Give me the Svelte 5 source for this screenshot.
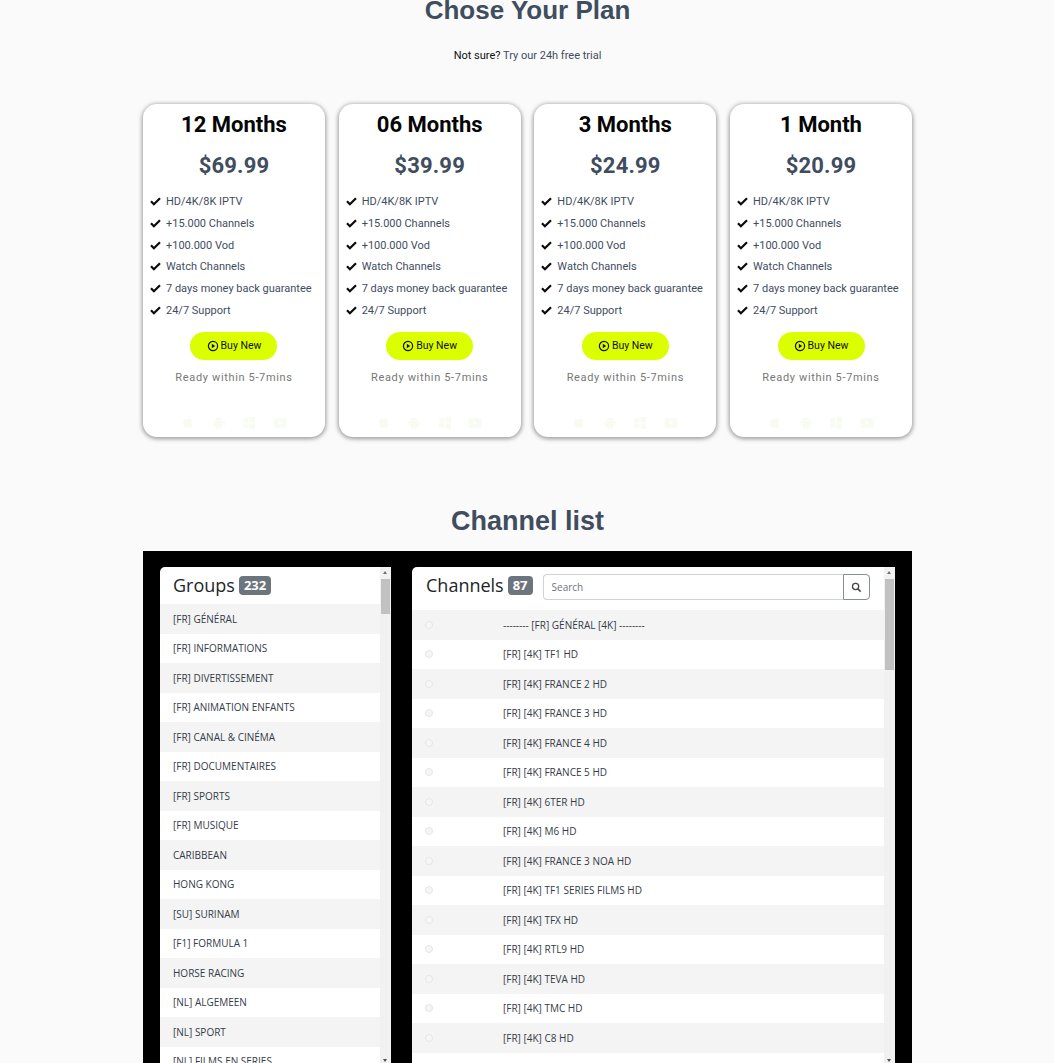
<script>
  const plans = [
    { name: '12 Months', price: '$69.99' },
    { name: '06 Months', price: '$39.99' },
    { name: '3 Months', price: '$24.99' },
    { name: '1 Month', price: '$20.99' },
  ];
  const features = [
    'HD/4K/8K IPTV',
    '+15.000 Channels',
    '+100.000 Vod',
    'Watch Channels',
    '7 days money back guarantee',
    '24/7 Support',
  ];
  const groups = [
    '[FR] GÉNÉRAL', '[FR] INFORMATIONS', '[FR] DIVERTISSEMENT', '[FR] ANIMATION ENFANTS',
    '[FR] CANAL & CINÉMA', '[FR] DOCUMENTAIRES', '[FR] SPORTS', '[FR] MUSIQUE',
    'CARIBBEAN', 'HONG KONG', '[SU] SURINAM', '[F1] FORMULA 1',
    'HORSE RACING', '[NL] ALGEMEEN', '[NL] SPORT', '[NL] FILMS EN SERIES',
  ];
  const channels = [
    '-------- [FR] GÉNÉRAL [4K] --------', '[FR] [4K] TF1 HD', '[FR] [4K] FRANCE 2 HD',
    '[FR] [4K] FRANCE 3 HD', '[FR] [4K] FRANCE 4 HD', '[FR] [4K] FRANCE 5 HD',
    '[FR] [4K] 6TER HD', '[FR] [4K] M6 HD', '[FR] [4K] FRANCE 3 NOA HD',
    '[FR] [4K] TF1 SERIES FILMS HD', '[FR] [4K] TFX HD', '[FR] [4K] RTL9 HD',
    '[FR] [4K] TEVA HD', '[FR] [4K] TMC HD', '[FR] [4K] C8 HD',
  ];
</script>

<main class="page">
  <h1 class="title">Chose Your Plan</h1>
  <p class="sub"><b>Not sure?</b> Try our 24h free trial</p>

  <section class="plans">
    {#each plans as plan}
      <article class="card">
        <h2>{plan.name}</h2>
        <div class="price">{plan.price}</div>
        <ul>
          {#each features as f}
            <li>
              <svg class="check" viewBox="0 0 12 10" aria-hidden="true"><path d="M1 4.800 4.200 8 11 1.400" fill="none" stroke="#0b0b0b" stroke-width="2.500"/></svg>
              {f}
            </li>
          {/each}
        </ul>
        <button type="button" class="buy">
          <svg viewBox="0 0 12 12" aria-hidden="true"><circle cx="6" cy="6" r="4.6" fill="none" stroke="#111" stroke-width="1.2"/><path d="M4.8 3.7 8.2 6 4.8 8.3Z" fill="#111"/></svg>
          Buy New
        </button>
        <div class="ready">Ready within 5-7mins</div>
        <div class="os" aria-hidden="true">
          <svg viewBox="0 0 14 14"><path d="M7.2 3.6C8 3.2 9 2.9 10 3.3c.6.2 1.1.6 1.4 1.1-1.7 1-1.4 3.4.4 4.1-.5 1.5-1.5 3.5-2.7 3.5-.8 0-1.100-.5-2-.5s-1.200.5-2 .5C3.700 12 2 9.300 2 7c0-2.400 1.500-4 3.200-4 .8 0 1.400.4 2 .6ZM7 2.800C7 1.600 8 .6 9.200.4c.1 1.300-1 2.400-2.200 2.400Z"/></svg>
          <svg viewBox="0 0 14 14"><path d="M3 5h8v5.500c0 .5-.4.800-.8.800H9.500V13.500H8V11.300H6V13.500H4.500V11.300H3.800c-.4 0-.8-.3-.8-.8ZM1 5h1.300v4.500H1ZM11.700 5H13v4.500h-1.300ZM3 4.500C3.100 2.900 4.800 1.500 7 1.500s3.900 1.400 4 3Z"/></svg>
          <svg viewBox="0 0 14 14"><path d="M1 2.500 6.500 1.700V6.500H1ZM7.500 1.600 13 .8V6.500H7.500ZM1 7.500H6.500V12.300L1 11.500ZM7.500 7.500H13V13.200L7.500 12.400Z"/></svg>
          <svg viewBox="0 0 16 14"><path fill-rule="evenodd" d="M2 1.500H14A1.500 1.500 0 0 1 15.500 3V11A1.500 1.500 0 0 1 14 12.500H2A1.500 1.500 0 0 1 .5 11V3A1.500 1.500 0 0 1 2 1.500ZM6.500 4.500V9.500L10.500 7Z"/></svg>
        </div>
      </article>
    {/each}
  </section>

  <h1 class="title list-title">Channel list</h1>

  <section class="browser">
    <div class="panel groups">
      <div class="col">
        <header class="head">
          <h3>Groups</h3><span class="badge">232</span>
        </header>
        <div class="rows">
          {#each groups as g}
            <div class="row">{g}</div>
          {/each}
        </div>
      </div>
      <div class="scrollbar">
        <span class="arrow up"></span>
        <span class="thumb short"></span>
        <span class="arrow down"></span>
      </div>
    </div>

    <div class="panel channels">
      <div class="col">
        <header class="head">
          <h3>Channels</h3><span class="badge">87</span>
          <div class="search">
            <input type="text" placeholder="Search" />
            <button type="button" aria-label="Search">
              <svg viewBox="0 0 12 12" aria-hidden="true"><circle cx="5" cy="5" r="3.400" fill="none" stroke="#444" stroke-width="1.400"/><path d="M7.500 7.500 10.500 10.500" stroke="#444" stroke-width="1.600"/></svg>
            </button>
          </div>
        </header>
        <div class="rows">
          {#each channels as c}
            <div class="row channel"><span class="radio"></span><span class="ch-name">{c}</span></div>
          {/each}
        </div>
      </div>
      <div class="scrollbar">
        <span class="arrow up"></span>
        <span class="thumb long"></span>
        <span class="arrow down"></span>
      </div>
    </div>
  </section>
</main>

<style>
  :global(body) {
    margin: 0;
    background: #fafafa;
  }
  .page {
    height: 1063px;
    overflow: hidden;
    box-sizing: border-box;
    padding: 0 142px 0 143px;
    font-family: Roboto, sans-serif;
  }
  .title {
    margin: 0;
    text-align: center;
    font: bold 26px/20px "Liberation Sans", sans-serif;
    color: #3f4d5f;
  }
  .sub {
    margin: 26px 0 0;
    text-align: center;
    font-size: 11px;
    line-height: 20px;
    color: #3f4d5f;
  }
  .sub b {
    font-weight: 400;
    color: #111;
  }

  .plans {
    display: grid;
    grid-template-columns: repeat(4, 1fr);
    gap: 13.7px;
    margin-top: 38px;
  }
  .card {
    height: 333px;
    background: #fff;
    border-radius: 14px;
    box-shadow: 0 1px 4px 1px rgba(0, 0, 0, 0.38);
    text-align: center;
    display: flex;
    flex-direction: column;
  }
  .card h2 {
    margin: 7px 0 0;
    font-size: 22px;
    font-weight: 700;
    line-height: 28px;
    color: #050505;
  }
  .price {
    margin-top: 13px;
    font-size: 22px;
    font-weight: 700;
    line-height: 28px;
    letter-spacing: 0.2px;
    color: #3f4d5f;
  }
  ul {
    list-style: none;
    margin: 11px 0 0;
    padding: 0 0 0 7px;
    text-align: left;
  }
  li {
    display: flex;
    align-items: center;
    gap: 5px;
    height: 21.7px;
    font-size: 11px;
    color: #3f4d5f;
    white-space: nowrap;
  }
  .check {
    width: 11px;
    height: 9px;
    flex: none;
  }
  .buy {
    align-self: center;
    display: flex;
    align-items: center;
    justify-content: center;
    gap: 2px;
    width: 87px;
    height: 28px;
    margin-top: 11px;
    border: 0;
    border-radius: 14px;
    background: #dcff00;
    font: 400 10.5px Roboto, sans-serif;
    color: #111;
    padding: 0 0 1px;
  }
  .buy svg {
    width: 12px;
    height: 12px;
  }
  .ready {
    margin-top: 11px;
    font-size: 11px;
    line-height: 14px;
    letter-spacing: 0.65px;
    color: #777;
  }
  .os {
    display: flex;
    justify-content: flex-start;
    gap: 16.5px;
    margin-top: 31px;
    padding-left: 38px;
  }
  .os svg {
    width: 14px;
    height: 14px;
    fill: #f8fbf2;
  }

  .list-title {
    font-size: 27px;
    margin-top: 74px;
  }
  .browser {
    margin-top: 20px;
    height: 540px;
    background: #000;
    box-sizing: border-box;
    padding: 16px 17px 0;
    display: flex;
    gap: 21px;
    align-items: flex-start;
  }
  .panel {
    display: flex;
    height: 498px;
    background: #fff;
    border-radius: 5px 0 0 0;
    overflow: hidden;
    font-family: "Open Sans", sans-serif;
  }
  .groups {
    width: 231px;
  }
  .channels {
    width: 483px;
  }
  .col {
    flex: 1;
    min-width: 0;
  }
  .head {
    display: flex;
    align-items: center;
    gap: 4px;
    height: 37px;
    box-sizing: border-box;
    padding: 0 0 1px 13px;
  }
  .channels .head {
    height: 43px;
    padding: 0 0 3px 14px;
  }
  h3 {
    margin: 0;
    font-size: 18px;
    font-weight: 400;
    line-height: 24px;
    color: #212529;
  }
  .channels h3 {
    margin-bottom: 4px;
  }
  .badge {
    padding: 0 5px;
    height: 19px;
    line-height: 19px;
    border-radius: 4px;
    background: #6c757d;
    color: #fff;
    font-size: 13px;
    font-weight: 700;
  }
  .channels .badge {
    margin-bottom: 4px;
  }
  .search {
    display: flex;
    margin-left: 6px;
    height: 26px;
    width: 327px;
  }
  input {
    flex: 1;
    min-width: 0;
    box-sizing: border-box;
    border: 1px solid #ced4da;
    border-right: 0;
    border-radius: 4px 0 0 4px;
    padding: 0 8px;
    font: 10px "Open Sans", sans-serif;
    background: #fff;
  }
  input::placeholder {
    color: #6c757d;
  }
  .search button {
    width: 27px;
    box-sizing: border-box;
    padding: 0;
    display: flex;
    align-items: center;
    justify-content: center;
    background: #fff;
    border: 1px solid #868e96;
    border-radius: 0 4px 4px 0;
  }
  .search svg {
    width: 11px;
    height: 11px;
  }
  .rows {
    overflow: hidden;
  }
  .row {
    height: 29.5px;
    display: flex;
    align-items: center;
    padding-left: 13px;
    font-size: 10px;
    color: #333c47;
    white-space: nowrap;
  }
  .row:nth-child(odd) {
    background: #f4f4f4;
  }
  .radio {
    width: 8px;
    height: 8px;
    box-sizing: border-box;
    border: 1px solid #e6e6e6;
    border-radius: 50%;
    background: #f6f6f6;
    flex: none;
  }
  .ch-name {
    margin-left: 70px;
  }
  .scrollbar {
    width: 11px;
    flex: none;
    background: #f1f1f1;
    display: flex;
    flex-direction: column;
    align-items: center;
    height: 100%;
    position: relative;
    padding-top: 12px;
    box-sizing: border-box;
  }
  .thumb {
    width: 9px;
    background: #c1c1c1;
  }
  .thumb.short {
    height: 35px;
  }
  .thumb.long {
    height: 91px;
  }
  .arrow {
    position: absolute;
    left: 3px;
    width: 0;
    height: 0;
    border-left: 2.5px solid transparent;
    border-right: 2.5px solid transparent;
  }
  .arrow.up {
    top: 4px;
    border-bottom: 3px solid #707070;
  }
  .arrow.down {
    bottom: 3px;
    border-top: 3px solid #505050;
  }
</style>
